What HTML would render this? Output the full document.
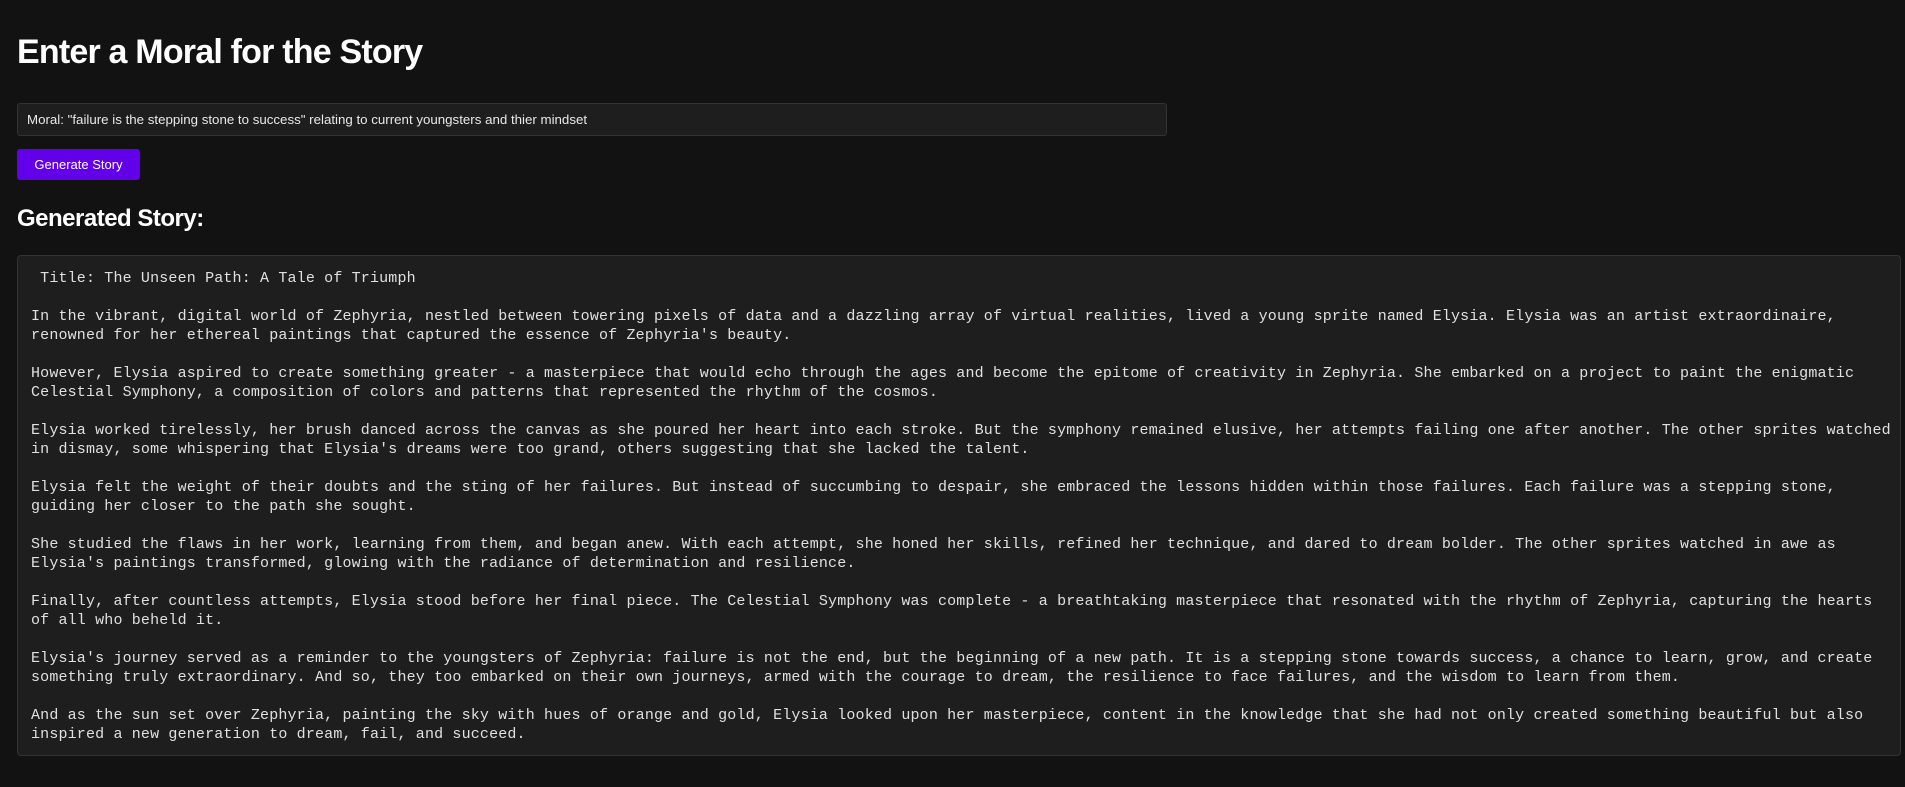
<!DOCTYPE html>
<html><head><meta charset="utf-8"><style>
html,body{margin:0;padding:0;background:#121212;width:1905px;height:787px;overflow:hidden;color:#fff;font-family:"Liberation Sans",sans-serif}
h1{position:absolute;left:17px;top:30px;margin:0;font-size:34px;font-weight:bold;letter-spacing:-0.8px;line-height:44px}
.inp{position:absolute;left:17px;top:103px;width:1139px;height:31px;background:#1e1e1e;border:1px solid #333;border-radius:3px;font-size:13.3px;line-height:31px;padding-left:9px;box-sizing:content-box;color:#e8e8e8}
.btn{position:absolute;left:17px;top:149px;width:123px;height:31px;background:#6200ea;border-radius:3px;font-size:13px;line-height:31px;text-align:center;color:#fff}
h2{position:absolute;left:17px;top:201px;margin:0;font-size:24px;font-weight:bold;letter-spacing:-0.5px;line-height:36px}
.story{position:absolute;left:17px;top:255px;width:1884px;height:501px;background:#1e1e1e;border:1px solid #333;border-radius:4px;box-sizing:border-box}
pre{margin:0;position:absolute;left:13px;top:13px;font-family:"Liberation Mono",monospace;font-size:15px;letter-spacing:0.16px;line-height:19px;color:#e0e0e0;white-space:pre}
</style></head><body>
<h1>Enter a Moral for the Story</h1>
<div class="inp">Moral: "failure is the stepping stone to success" relating to current youngsters and thier mindset</div>
<div class="btn">Generate Story</div>
<h2>Generated Story:</h2>
<div class="story"><pre> Title: The Unseen Path: A Tale of Triumph

In the vibrant, digital world of Zephyria, nestled between towering pixels of data and a dazzling array of virtual realities, lived a young sprite named Elysia. Elysia was an artist extraordinaire,
renowned for her ethereal paintings that captured the essence of Zephyria's beauty.

However, Elysia aspired to create something greater - a masterpiece that would echo through the ages and become the epitome of creativity in Zephyria. She embarked on a project to paint the enigmatic
Celestial Symphony, a composition of colors and patterns that represented the rhythm of the cosmos.

Elysia worked tirelessly, her brush danced across the canvas as she poured her heart into each stroke. But the symphony remained elusive, her attempts failing one after another. The other sprites watched
in dismay, some whispering that Elysia's dreams were too grand, others suggesting that she lacked the talent.

Elysia felt the weight of their doubts and the sting of her failures. But instead of succumbing to despair, she embraced the lessons hidden within those failures. Each failure was a stepping stone,
guiding her closer to the path she sought.

She studied the flaws in her work, learning from them, and began anew. With each attempt, she honed her skills, refined her technique, and dared to dream bolder. The other sprites watched in awe as
Elysia's paintings transformed, glowing with the radiance of determination and resilience.

Finally, after countless attempts, Elysia stood before her final piece. The Celestial Symphony was complete - a breathtaking masterpiece that resonated with the rhythm of Zephyria, capturing the hearts
of all who beheld it.

Elysia's journey served as a reminder to the youngsters of Zephyria: failure is not the end, but the beginning of a new path. It is a stepping stone towards success, a chance to learn, grow, and create
something truly extraordinary. And so, they too embarked on their own journeys, armed with the courage to dream, the resilience to face failures, and the wisdom to learn from them.

And as the sun set over Zephyria, painting the sky with hues of orange and gold, Elysia looked upon her masterpiece, content in the knowledge that she had not only created something beautiful but also
inspired a new generation to dream, fail, and succeed.</pre></div>
</body></html>
